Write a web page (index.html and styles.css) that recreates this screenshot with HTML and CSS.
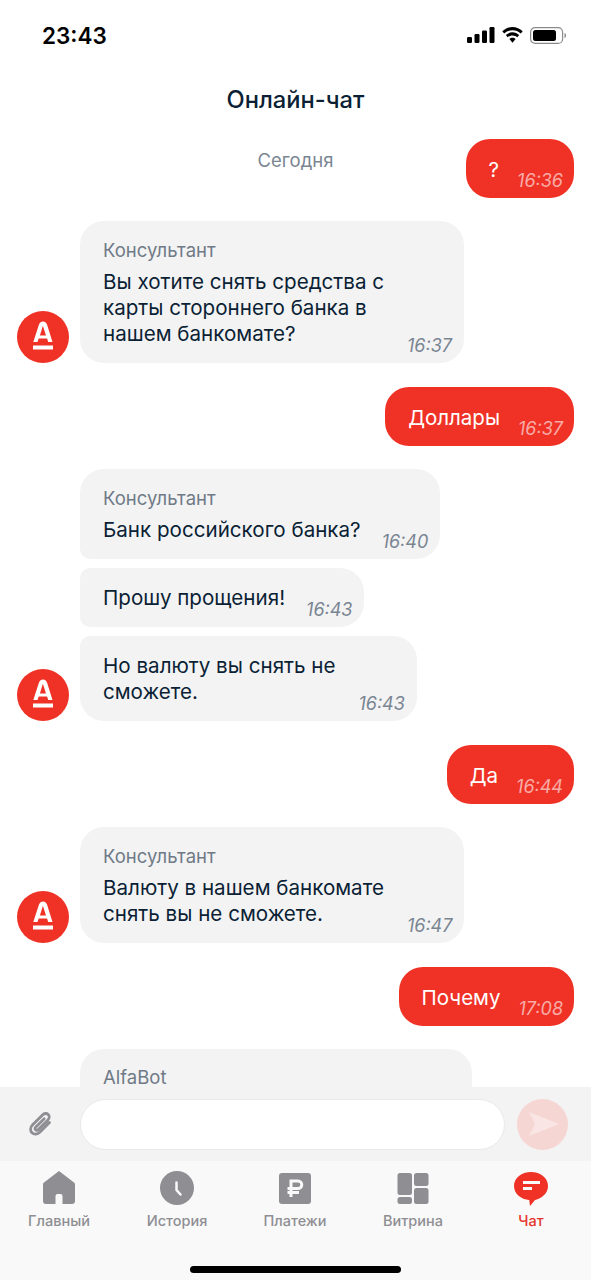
FILE: index.html
```html
<!DOCTYPE html>
<html lang="ru">
<head>
<meta charset="utf-8">
<title>Онлайн-чат</title>
<link rel="stylesheet" href="styles.css">
</head>
<body>
<div class="screen">
  <div class="status">
    <span class="clock">23:43</span>
    <div class="status-icons">
      <svg width="28" height="16" viewBox="0 0 28 16"><rect x="0" y="10" width="5" height="6" rx="1.2"/><rect x="7.5" y="7" width="5" height="9" rx="1.2"/><rect x="15" y="3.5" width="5" height="12.5" rx="1.2"/><rect x="22.5" y="0" width="5" height="16" rx="1.2"/></svg>
      <svg width="23" height="17" viewBox="0 0 23 17"><path d="M11.5 3.2c3.2 0 6.1 1.2 8.3 3.3l1.9-2.2C19 1.7 15.4 0 11.5 0S4 1.7 1.3 4.3l1.9 2.2C5.400 4.400 8.300 3.200 11.500 3.200z"/><path d="M11.500 8.400c1.800 0 3.500.700 4.800 1.900l1.900-2.200c-1.800-1.700-4.200-2.800-6.700-2.800s-4.900 1.100-6.700 2.800l1.900 2.200c1.300-1.200 3-1.900 4.800-1.900z"/><path d="M11.500 10.800c-1.200 0-2.300.500-3.100 1.200l3.100 3.700 3.100-3.700c-.8-.7-1.900-1.200-3.100-1.200z"/></svg>
      <svg width="37" height="17" viewBox="0 0 37 17"><rect x=".6" y=".6" width="32" height="15.800" rx="4.500" class="batt-frame"/><rect x="3" y="3" width="23" height="11" rx="2.500"/><path d="M34.500 6v5c1-.3 1.600-1.400 1.600-2.500S35.500 6.300 34.500 6z" class="batt-cap"/></svg>
    </div>
  </div>
  <h1 class="title">Онлайн-чат</h1>

  <div class="chat">
    <div class="first-row">
      <div class="date">Сегодня</div>
      <div class="out"><span>?</span><time>16:36</time></div>
    </div>

    <div class="in-row">
      <svg class="avatar" viewBox="0 0 52 52"><use href="#alfa"/></svg>
      <div class="group">
        <div class="in gap-wide">
          <div><div class="sender">Консультант</div><div class="text">Вы хотите снять средства с<br>карты стороннего банка в<br>нашем банкомате?</div></div>
          <time>16:37</time>
        </div>
      </div>
    </div>

    <div class="out"><span>Доллары</span><time>16:37</time></div>

    <div class="in-row">
      <svg class="avatar" viewBox="0 0 52 52"><use href="#alfa"/></svg>
      <div class="group">
        <div class="in in-top">
          <div><div class="sender">Консультант</div><div class="text">Банк российского банка?</div></div>
          <time>16:40</time>
        </div>
        <div class="in in-mid">
          <div class="text">Прошу прощения!</div>
          <time>16:43</time>
        </div>
        <div class="in in-last gap-wide">
          <div class="text">Но валюту вы снять не<br>сможете.</div>
          <time>16:43</time>
        </div>
      </div>
    </div>

    <div class="out"><span>Да</span><time>16:44</time></div>

    <div class="in-row">
      <svg class="avatar" viewBox="0 0 52 52"><use href="#alfa"/></svg>
      <div class="group">
        <div class="in gap-wide">
          <div><div class="sender">Консультант</div><div class="text">Валюту в нашем банкомате<br>снять вы не сможете.</div></div>
          <time>16:47</time>
        </div>
      </div>
    </div>

    <div class="out"><span>Почему</span><time>17:08</time></div>

    <div class="in-row">
      <div class="avatar-slot"></div>
      <div class="in bot"><div class="sender">AlfaBot</div></div>
    </div>
  </div>

  <div class="composer">
    <svg class="clip" width="26" height="26" viewBox="0 0 26 26"><path d="M21.500 11.500 12 21c-2.600 2.600-6 2.700-8 .7s-1.900-5.300.7-7.900l9.800-9.800c1.800-1.800 4.200-2 5.700-.5s1.300 3.900-.5 5.700l-9.300 9.300c-.9.900-2.100 1-2.800.3s-.6-1.900.3-2.800l8.300-8.300" /></svg>
    <div class="field"></div>
    <div class="send"><svg width="30" height="24" viewBox="0 0 30 24"><path d="M0 0 30 12 0 24 6 12z"/></svg></div>
  </div>

  <nav class="tabs">
    <div class="tab-row">
      <div class="tab">
        <svg width="34" height="36" viewBox="0 0 34 36"><path d="M17 1 32 12.500a2 2 0 0 1 1 1.700V31a3 3 0 0 1-3 3h-9.500V26a2 2 0 0 0-2-2h-3a2 2 0 0 0-2 2v8H4a3 3 0 0 1-3-3V14.200a2 2 0 0 1 1-1.700z"/></svg>
        <span>Главный</span>
      </div>
      <div class="tab">
        <svg width="34" height="36" viewBox="0 0 34 36"><circle cx="17" cy="18" r="17"/><path d="M16.500 12.500v7.500l4 4.500" class="cut thin"/></svg>
        <span>История</span>
      </div>
      <div class="tab">
        <svg width="34" height="36" viewBox="0 0 34 36"><rect x="1" y="3" width="32" height="31" rx="3"/><path d="M13 27V11h7a3.800 3.800 0 0 1 0 7.600H9.500M9.500 22.500H21" class="cut square"/></svg>
        <span>Платежи</span>
      </div>
      <div class="tab">
        <svg width="34" height="36" viewBox="0 0 34 36"><rect x="1.500" y="3" width="14.500" height="22" rx="2.500"/><rect x="1.500" y="27" width="14.500" height="7" rx="2.500"/><rect x="18" y="3" width="14.500" height="13" rx="2.500"/><rect x="18" y="18" width="14.500" height="16" rx="2.500"/></svg>
        <span>Витрина</span>
      </div>
      <div class="tab tab-active">
        <svg width="34" height="36" viewBox="0 0 34 36"><path d="M17 2c9.400 0 17 5.800 17 14 0 7.300-6 12.300-13.200 14.200L16 36l-.8-6C7 29.400 0 23.800 0 16 0 7.800 7.600 2 17 2z"/><path d="M9 12.500h17M9 18.500h9" class="cut square"/></svg>
        <span>Чат</span>
      </div>
    </div>
    <div class="home-bar"></div>
  </nav>
</div>
<svg class="defs" width="0" height="0">
  <symbol id="alfa" viewBox="0 0 52 52">
    <circle cx="26" cy="26" r="26" fill="#f03226"/>
    <path d="M26 10.500c2.300 0 3.400 1.300 4.100 3.300L35.500 31h-4.300l-1.100-3.500h-8.400L20.500 31h-4.200l5.600-17.200c.7-2 1.800-3.300 4.100-3.300zm-.1 4.200-3 9.700h6.100z" fill="#fff" fill-rule="evenodd"/>
    <rect x="16" y="34.500" width="20" height="4" fill="#fff"/>
  </symbol>
</svg>
</body>
</html>
```
FILE: styles.css
```css
* { box-sizing: border-box; }
html, body { margin: 0; padding: 0; background: #fff; }
body { font-family: Inter, "Noto Sans", sans-serif; color: #0b1f35; }
.defs { display: block; }
.screen { width: 591px; height: 1280px; display: flex; flex-direction: column; overflow: hidden; }

.status { height: 71px; flex: none; display: flex; justify-content: space-between; align-items: center; padding: 0 24px 0 42px; }
.clock { font-size: 22.500px; font-weight: 600; color: #000; }
.status-icons { display: flex; align-items: center; gap: 6px; margin-bottom: 1px; }
.status-icons svg { display: block; fill: #000; }
.status-icons .batt-frame { fill: none; stroke: #8a8a8a; stroke-width: 1.200; }
.status-icons .batt-cap { fill: #8a8a8a; }

.title { flex: none; margin: 0; height: 59px; padding-top: 14px; line-height: 30px; font-size: 23.700px; font-weight: 500; text-align: center; color: #0b1f35; }

.chat { flex: 1; min-height: 0; overflow: hidden; display: flex; flex-direction: column; gap: 23.500px; padding: 8.500px 17px 0; }
.chat > * { flex: none; }
.first-row { display: grid; justify-items: end; align-items: start; }
.first-row > * { grid-area: 1 / 1; }
.date { justify-self: center; margin-top: 9.500px; line-height: 24px; font-size: 18.500px; color: #7a8592; }

time { flex: none; font-size: 18px; line-height: 20px; font-style: italic; color: #7a8592; }

.out { align-self: flex-end; display: flex; align-items: flex-end; gap: 18px; height: 59px; padding: 0 11px 7px 23px; border-radius: 24px; background: #f03226; color: #fff; font-size: 20.500px; }
.out span { line-height: 26px; margin-bottom: 8px; }
.out time { color: rgba(255, 255, 255, .6); }

.in-row { display: flex; align-items: flex-end; gap: 11px; }
.avatar { flex: none; width: 52px; height: 52px; }
.avatar-slot { flex: none; width: 52px; }
.group { display: flex; flex-direction: column; align-items: flex-start; gap: 9px; }

.in { display: flex; align-items: flex-end; gap: 21px; padding: 17px 12px 7px 23px; border-radius: 24px; background: #f3f3f4; }
.in.gap-wide { gap: 23px; }
.in.in-top { border-bottom-left-radius: 10px; }
.in.in-mid { border-top-left-radius: 10px; border-bottom-left-radius: 10px; }
.in.in-last { border-top-left-radius: 10px; }
.in.bot { display: block; width: 392px; height: 38px; padding-top: 19px; border-bottom-left-radius: 0; border-bottom-right-radius: 0; }
.in.bot .sender { line-height: 18px; margin-bottom: 0; }
.sender { font-size: 18.500px; line-height: 24px; margin-bottom: 7px; color: #6f7a86; }
.text { font-size: 20.600px; line-height: 26px; margin-bottom: 9px; }

.composer { flex: none; height: 74px; display: flex; align-items: center; background: #f3f3f3; padding: 0 23px 0 28px; }
.clip { flex: none; fill: none; stroke: #8e8e93; stroke-width: 2.800; stroke-linecap: round; margin-right: 26px; }
.field { flex: 1; height: 51px; background: #fff; border: 1px solid #e9e9e9; border-radius: 26px; }
.send { flex: none; width: 51px; height: 51px; margin-left: 12px; border-radius: 50%; background: #f6d6d3; display: flex; align-items: center; justify-content: center; }
.send svg { display: block; fill: #f9e6e4; margin-left: 2px; }

.tabs { flex: none; height: 119px; background: #f9f9f9; padding: 9px 1px 0 0; }
.tab-row { display: grid; grid-template-columns: repeat(5, 1fr); }
.tab { display: flex; flex-direction: column; align-items: center; gap: 5px; font-size: 14.500px; line-height: 20px; font-weight: 500; color: #8e8e93; }
.tab svg { display: block; fill: #8e8e93; }
.tab .cut { fill: none; stroke: #f9f9f9; stroke-width: 3; stroke-linecap: round; }
.tab .cut.thin { stroke-width: 2.500; }
.tab .cut.square { stroke-linecap: butt; }
.tab-active { color: #e5352b; }
.tab-active svg { fill: #f03226; }
.home-bar { width: 211px; height: 7px; margin: 35px auto 0; border-radius: 4px; background: #000; }
```
